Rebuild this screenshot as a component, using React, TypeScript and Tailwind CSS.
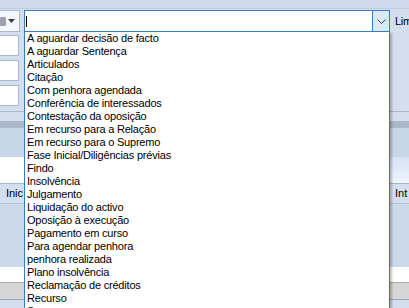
const items = [
  "A aguardar decisão de facto",
  "A aguardar Sentença",
  "Articulados",
  "Citação",
  "Com penhora agendada",
  "Conferência de interessados",
  "Contestação da oposição",
  "Em recurso para a Relação",
  "Em recurso para o Supremo",
  "Fase Inicial/Diligências prévias",
  "Findo",
  "Insolvência",
  "Julgamento",
  "Liquidação do activo",
  "Oposição à execução",
  "Pagamento em curso",
  "Para agendar penhora",
  "penhora realizada",
  "Plano insolvência",
  "Reclamação de créditos",
  "Recurso",
  "Suspenso",
];

function Chevron() {
  return (
    <svg width="9" height="5" viewBox="0 0 9 5" className="block">
      <path d="M0.5 0.5L4.5 4.5L8.5 0.5" fill="none" stroke="#404040" strokeWidth="1" />
    </svg>
  );
}

function SmallCombo() {
  return (
    <div className="flex h-[22px] w-[22px] shrink-0 ml-[-2px] items-center gap-[2px] border border-[#abb9cc] bg-[#f4f7fb] pl-[1px]">
      <div className="h-[9px] w-[6px] bg-[#9aa3ad] rounded-[1px]" />
      <svg width="7" height="4" viewBox="0 0 7 4" className="block">
        <path d="M0 0H7L3.5 4Z" fill="#3c3c3c" />
      </svg>
    </div>
  );
}

function MainCombo() {
  return (
    <div className="flex h-[22px] w-[366px] shrink-0 border border-[#3a7bbd] bg-white">
      <div className="flex flex-1 items-center pl-[1px]">
        <div className="h-[11px] w-px bg-black" />
      </div>
      <div className="flex w-[17px] items-center justify-center border-l border-[#3a7bbd] bg-[#dbe8f5]">
        <Chevron />
      </div>
    </div>
  );
}

function DropList() {
  return (
    <div className="absolute left-[24px] top-[31px] h-[290px] w-[366px] border border-[#3a7bbd] bg-white shadow-[2px_2px_2px_rgba(0,0,0,0.25)]">
      <div className="flex flex-col pl-[2px]">
        {items.map((t) => (
          <div key={t} className="h-[13px] whitespace-nowrap text-[11px] leading-[13px] tracking-[-0.2px] text-black">
            {t}
          </div>
        ))}
      </div>
    </div>
  );
}

function TextBox() {
  return <div className="h-[21px] w-[21px] ml-[-2px] border border-[#abb9cc] bg-white" />;
}

export default function App() {
  return (
    <div className="relative h-[308px] w-[409px] overflow-hidden bg-[#d3dfee] font-['Liberation_Sans',Arial,sans-serif]">
      <div className="h-[9px] border-b border-[#bfcde0] bg-[#cfdbec]" />
      <div className="mt-px flex h-[22px] items-center gap-[4px]">
        <SmallCombo />
        <MainCombo />
        <span className="ml-[1px] shrink-0 whitespace-nowrap text-[11px] leading-[13px] tracking-[-0.3px] text-black">Lim</span>
      </div>
      <div className="mt-[3px] flex h-[75px] flex-col gap-[4px]">
        <TextBox />
        <TextBox />
        <TextBox />
      </div>
      <div className="mt-[1px] h-px bg-[#a9b8cc]" />
      <div className="h-[9px]" />
      <div className="h-[7px] bg-[#a9b7ca]" />
      <div className="h-[29px] bg-[#c8d6ea]" />
      <div className="flex h-[26px]">
        <div className="w-[24px] bg-white" />
        <div className="flex-1 bg-gradient-to-b from-[#d5e3f4] to-[#eef5fc]" />
      </div>
      <div className="h-px bg-[#a7b6c9]" />
      <div className="flex h-[19px] items-center justify-between bg-[#d3dfee] text-[11px] leading-[13px] text-black">
        <span className="w-[24px] pr-[1px] text-right">Inic</span>
        <span className="w-[14px] whitespace-nowrap">Int</span>
      </div>
      <div className="h-px bg-[#b4c2d4]" />
      <div className="h-[63px] bg-[#ccd9eb]" />
      <div className="h-[15px] bg-white" />
      <div className="h-px bg-[#a8a8a8]" />
      <div className="h-[16px] bg-[#d6d6d6]" />
      <div className="h-px bg-[#9aa6b5]" />
      <DropList />
    </div>
  );
}
